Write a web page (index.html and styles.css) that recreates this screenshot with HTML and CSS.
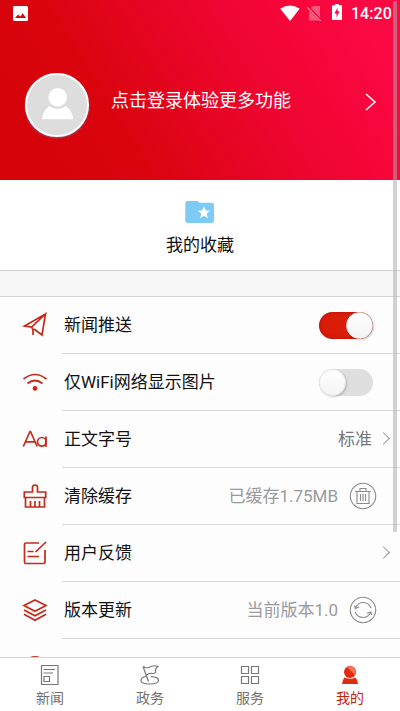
FILE: index.html
```html
<!DOCTYPE html>
<html lang="zh-CN">
<head>
<meta charset="utf-8">
<meta name="viewport" content="width=device-width, initial-scale=1">
<title>我的</title>
<link rel="stylesheet" href="styles.css">
</head>
<body>
<div class="app">
  <header class="hero">
    <div class="status">
      <svg class="status-pic" width="15" height="15" viewBox="0 0 15 15"><path fill="#fff" fill-rule="evenodd" d="M1.5 0h12A1.5 1.5 0 0 1 15 1.500v12a1.500 1.500 0 0 1-1.500 1.500h-12A1.500 1.500 0 0 1 0 13.500v-12A1.500 1.500 0 0 1 1.500 0zM2 12h11L9.700 7.300 7.500 10.500 5 8.500z"/></svg>
      <div class="status-right">
        <svg width="64" height="18" viewBox="280 3 64 18">
          <path fill="#fff" d="M280.300 8.800Q290 2.200 299.700 8.800L290 21z"/>
          <path fill="#fff" opacity=".32" d="M313 6h7v14.500h-11V10z"/>
          <path d="M307.500 6.500 321.300 21" stroke="#f90639" stroke-width="2.600"/>
          <path d="M307.500 7.500 321 21.300" stroke="#fb7894" stroke-width="1.200"/>
          <path fill="#fff" fill-rule="evenodd" d="M335 4h4v1.300h3V20h-10V5.300h3zM337.500 7.500 334.500 13.500h2V17.500l3-6.300h-2z"/>
        </svg>
        <span class="clock">14:20</span>
      </div>
    </div>
    <div class="login">
      <div class="avatar">
        <svg width="32" height="32" viewBox="42 88 32 32"><circle cx="57.700" cy="97.300" r="9.200" fill="#fff"/><path fill="#fff" d="M42 119.200q.7-8.300 7.500-13.200 8.200 6.500 16.400 0Q72.500 111 73.200 119.200z"/></svg>
      </div>
      <span class="login-text">点击登录体验更多功能</span>
      <svg class="login-arrow" width="12" height="18" viewBox="0 0 12 18"><path d="m1 1 9 8-9 8" fill="none" stroke="#fff" stroke-width="1.500"/></svg>
    </div>
  </header>

  <section class="favorite">
    <svg width="30" height="24" viewBox="185 200 30 24"><path fill="#7ecaf6" d="M187.500 201h9.500q1 0 1.500 1l.5.700h12.500q2.500 0 2.500 2.500v15.500q0 2.300-2.500 2.300h-24q-2.200 0-2.200-2.300v-17.400q0-2.300 2.200-2.300z"/><path fill="#fff" d="m204 206.300 1.700 4.300 4.500.2-3.500 2.900 1.200 4.500-3.900-2.500-3.900 2.500 1.200-4.500-3.500-2.900 4.500-.2z"/></svg>
    <span>我的收藏</span>
  </section>
  <div class="gap"></div>

  <main class="list">
    <div class="row">
      <svg class="icon" width="26" height="26" viewBox="0 0 26 26"><path d="M23.500 2 2.500 14l7 1L23.500 2 20 23l-8-6M9.500 15l1.500 2.500v5.500"/></svg>
      <div class="body"><span>新闻推送</span><i class="switch on"></i></div>
    </div>
    <div class="row">
      <svg class="icon" width="26" height="26" viewBox="0 0 26 26"><path d="M1.500 10q11.500-9 23 0M5.500 14.500q7.500-6 15 0"/><circle class="solid" cx="13" cy="19.400" r="2.300"/></svg>
      <div class="body"><span>仅WiFi网络显示图片</span><i class="switch"></i></div>
    </div>
    <div class="row">
      <svg class="icon" width="26" height="26" viewBox="0 0 26 26"><path d="M1.300 20.500 8 5.500h.5l6.700 15M3.500 15.800h9.500M24 10.500v10.500"/><circle cx="19.800" cy="15.800" r="4.300"/></svg>
      <div class="body"><span>正文字号</span><div class="end near"><span class="value">标准</span><i class="chev"></i></div></div>
    </div>
    <div class="row">
      <svg class="icon" width="26" height="26" viewBox="0 0 26 26"><path d="M10.500 9V4.500q0-2.500 2.500-2.500t2.500 2.500V9h8.200v5.500H2.300V9zM3.500 14.500V24h19v-9.500M8.500 18v5.500M13 18v5.500M17.500 18v5.500"/></svg>
      <div class="body"><span>清除缓存</span><div class="end"><span class="value light">已缓存1.75MB</span>
        <svg class="round" width="28" height="28" viewBox="0 0 28 28"><circle cx="14" cy="14" r="12.700"/><path d="M6 9.500h16M11 9V6.500h6V9M8 9.500v12h12v-12M11.500 12v7M14 12v7M16.500 12v7"/></svg></div></div>
    </div>
    <div class="row">
      <svg class="icon" width="26" height="26" viewBox="0 0 26 26"><path d="M17 3H4Q2.500 3 2.500 4.500v17.300q0 1.700 1.500 1.700h17.500q1.500 0 1.500-1.500V10M13.500 12 24 2M5.500 11.500h6M5.500 16.500h11.500"/></svg>
      <div class="body"><span>用户反馈</span><div class="end near"><i class="chev"></i></div></div>
    </div>
    <div class="row">
      <svg class="icon" width="26" height="26" viewBox="0 0 26 26"><path d="M13 3 24 8.500 13 14.300 2 8.500zM2 13l11 5.800L24 13M2 17.300l11 5.900 11-5.900"/></svg>
      <div class="body"><span>版本更新</span><div class="end"><span class="value light">当前版本1.0</span>
        <svg class="round" width="28" height="28" viewBox="0 0 28 28"><circle cx="14" cy="14" r="12.700"/><path d="M5.500 9.500 6.300 12.500 10 11M6.300 12Q9 6.500 14 6.500q5.500 0 8 5.500M22.700 19l-1-3-3.700 1.200M21.700 16.500q-2.700 5-7.700 5-5.500 0-8-5.500"/></svg></div></div>
    </div>
    <div class="row">
      <svg class="icon" width="26" height="26" viewBox="0 0 26 26"><circle cx="13" cy="13.800" r="11"/></svg>
      <div class="body"></div>
    </div>
  </main>

  <nav class="tabs">
    <div class="tab"><svg width="20" height="22" viewBox="40 664 20 22"><path d="M41.500 665.500h16.500v19h-16.500zM43.500 669.500h11.500M43.500 673h9.500M44 676.500h5.500v5h-5.500z"/></svg><span>新闻</span></div>
    <div class="tab"><svg width="20" height="22" viewBox="140 664 20 22"><path d="m143 666.500 5.500 15M143 666.500q3.500 2.500 8 0 3.500-1.500 7 0-3 2-2.500 4.500.500 2.500-2.500 2.500-4-.5-6.500 1.500M146 676.500q-5 .5-5 4 0 3.500 8.500 3.500t9-3.500q0-3.500-7.500-3.800"/></svg><span>政务</span></div>
    <div class="tab"><svg width="20" height="22" viewBox="240 664 20 22"><path d="M241.500 666.500h7v7h-7zM251.500 666.500h7v7h-7zM241.500 676.500h7v7h-7zM251.500 676.500h7v7h-7z"/></svg><span>服务</span></div>
    <div class="tab active"><svg width="20" height="22" viewBox="340 664 20 22"><path class="person" d="M342 684q.300-4 2.500-6.500 5.500 2.500 11 0 2.200 2.500 2.500 6.500z"/><circle class="person" cx="350" cy="672" r="6"/><path class="shine" d="M347 667q4-2.500 7 .5 3 3.500 1 7.500z"/></svg><span>我的</span></div>
  </nav>
  <div class="scrollbar"></div>
</div>
</body>
</html>
```
FILE: styles.css
```css
*, *::before { box-sizing: border-box; }
body {
  margin: 0;
  font-family: Roboto, "Noto Sans CJK SC", sans-serif;
  font-size: 17px;
  line-height: 24px;
  color: #111;
}
svg { display: block; flex: none; }
.app {
  position: relative;
  display: flex;
  flex-direction: column;
  width: 400px;
  height: 711px;
  overflow: hidden;
  background: #fdfdfd;
}
.hero {
  flex: none;
  height: 180px;
  color: #fff;
  background: linear-gradient(58deg, #d6040a 12%, #da040f 30%, #ee0530 62%, #fc0843 90%);
}
.status {
  display: flex;
  justify-content: space-between;
  height: 27px;
  padding: 3px 9px 0 13px;
}
.status-pic { margin-top: 3px; }
.status-right { display: flex; gap: 7px; margin-right: -1px; }
.clock { font-size: 16px; font-weight: 500; line-height: 21px; letter-spacing: .1px; }
.login {
  display: flex;
  align-items: center;
  height: 154px;
  padding: 0 23px 0 25px;
}
.avatar {
  display: flex;
  justify-content: center;
  align-items: center;
  width: 64px;
  height: 64px;
  margin-top: 1px;
  border: 2.5px solid #fff;
  border-radius: 50%;
  background: #ddd;
  box-shadow: 0 1px 2px #779c;
}
.avatar svg { margin: -1px 0 0 2px; }
.login-text { margin: -6px 0 0 22px; font-size: 18px; }
.login-arrow { margin: -5px 0 0 auto; }
.favorite {
  display: flex;
  flex: none;
  flex-direction: column;
  align-items: center;
  gap: 9px;
  height: 90px;
  padding-top: 20px;
  background: #fff;
}
.gap {
  flex: none;
  height: 27px;
  border: solid #d6d6d6;
  border-width: 1px 0;
  background: #f7f7f7;
}
.list { flex: 1; min-height: 0; overflow: hidden; }
.row { display: flex; align-items: center; height: 57px; padding-left: 22px; }
.body {
  display: flex;
  align-items: center;
  justify-content: space-between;
  flex: 1;
  height: 57px;
  margin-left: 14px;
  padding: 0 26px 0 2px;
  border-bottom: 1px solid #d8d8d8;
}
.icon { margin-top: -1px; fill: none; stroke: #c52a18; stroke-width: 1.7; }
.icon .solid { fill: #d02312; stroke: none; }
.end { display: flex; align-items: center; gap: 11px; margin-right: -3px; }
.end.near { gap: 7px; margin-right: -17px; }
.value { color: #777; }
.value.light { color: #999a9e; }
.chev {
  width: 9px;
  height: 9px;
  margin: -1px 3px 0 0;
  border: solid #999;
  border-width: 1px 1px 0 0;
  transform: rotate(45deg);
}
.round { fill: none; stroke: #8c8c8c; stroke-width: 1.1; }
.switch {
  display: flex;
  width: 54px;
  height: 27px;
  margin-right: 1px;
  border-radius: 14px;
  background: #dedede;
}
.switch::before {
  content: "";
  width: 27px;
  height: 27px;
  border: 1px solid #e6e6e6;
  border-radius: 50%;
  background: linear-gradient(#fff, #f3f3f3);
  box-shadow: 1px 1px 2px #0003;
}
.switch.on { justify-content: flex-end; background: #d91d09; box-shadow: inset 0 0 4px #9008; }
.tabs {
  display: flex;
  flex: none;
  height: 54px;
  border-top: 1px solid #d3d3d3;
  background: #fff;
}
.tab {
  display: flex;
  flex: 1;
  flex-direction: column;
  align-items: center;
  padding-top: 6px;
  font-size: 14px;
  line-height: 24px;
  color: #707070;
}
.tab svg { fill: none; stroke: #777; stroke-width: 1.2; }
.tab.active { color: #c7210f; }
.tab .person { fill: #e32a0c; stroke: none; }
.tab .shine { fill: #f47058; stroke: none; }
.scrollbar {
  position: absolute;
  top: 1px;
  left: 393px;
  width: 4px;
  height: 531px;
  background: #aaa8;
}
```
